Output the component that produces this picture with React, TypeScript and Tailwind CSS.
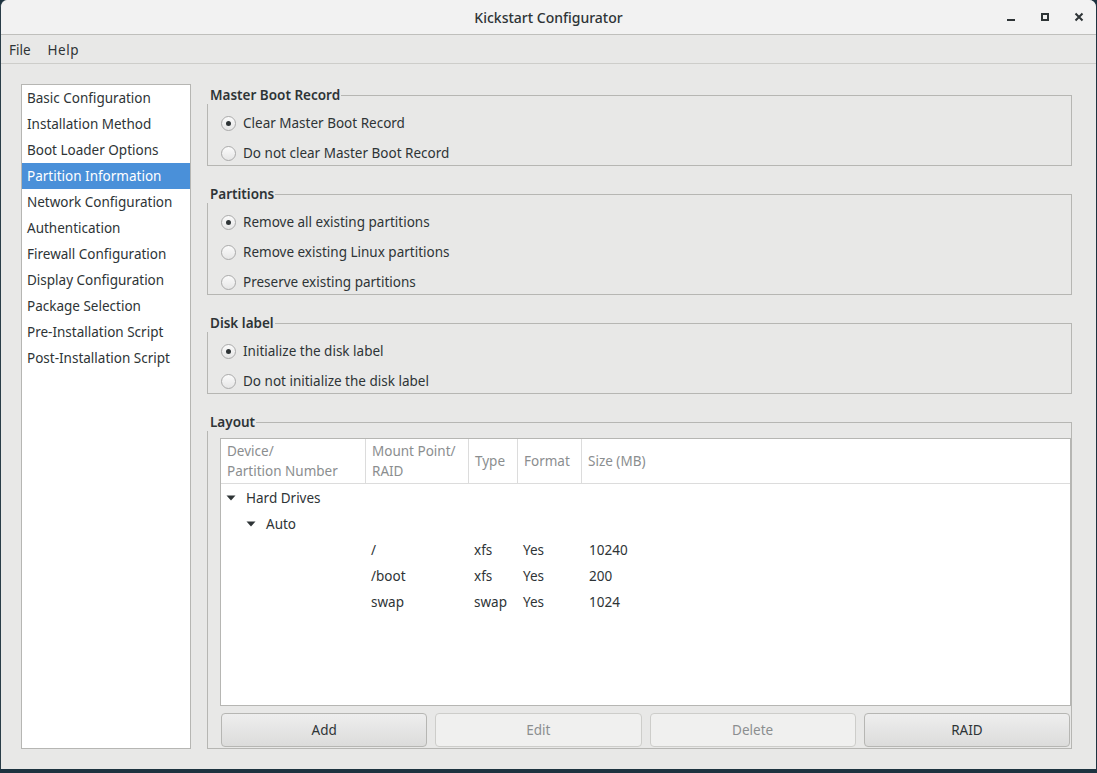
import React from "react";

const font = { fontFamily: '"Noto Sans", "Open Sans", sans-serif' };

function Radio({ checked, label }: { checked?: boolean; label: string }) {
  return (
    <div className="flex items-center h-[30px] pl-[14px]">
      <span className="w-[15px] h-[15px] rounded-full border border-[#aaaaaa] bg-gradient-to-b from-[#fbfbfb] to-[#e6e6e6] flex items-center justify-center shrink-0">
        {checked && <span className="w-[5px] h-[5px] rounded-full bg-[#2e3436]" />}
      </span>
      <span className="ml-[7px] text-[13.5px] text-[#2e3436]">{label}</span>
    </div>
  );
}

function Frame({ title, children, className = "" }: { title: string; children: React.ReactNode; className?: string }) {
  return (
    <div className={"relative " + className}>
      <div className="absolute left-0 right-0 top-[9px] bottom-0 border border-[#b6b6b3]" />
      <div className="relative flex">
        <span className="bg-[#e8e8e7] pl-[3px] pr-[1px] text-[13.5px] font-semibold text-[#2e3436] leading-[18px]">{title}</span>
      </div>
      <div className="relative">{children}</div>
    </div>
  );
}

const navItems = [
  "Basic Configuration",
  "Installation Method",
  "Boot Loader Options",
  "Partition Information",
  "Network Configuration",
  "Authentication",
  "Firewall Configuration",
  "Display Configuration",
  "Package Selection",
  "Pre-Installation Script",
  "Post-Installation Script",
];

function Caret() {
  return (
    <svg width="10" height="6" viewBox="0 0 10 6" className="shrink-0">
      <path d="M0.5 0.5 L9.5 0.5 L5 5.5 Z" fill="#2e3436" />
    </svg>
  );
}

export default function App() {
  return (
    <div className="w-[1097px] h-[773px] bg-[#1d3340] overflow-hidden" style={font}>
      <div className="w-[1096px] h-[769px] bg-[#e8e8e7] rounded-t-[7px] border-l border-[#2a3d48] flex flex-col">
        {/* title bar */}
        <div className="h-[35px] bg-[#f2f2f2] border-b border-[#bfbfbc] rounded-t-[7px] flex items-center relative shrink-0">
          <div className="absolute inset-0 flex items-center justify-center text-[14px] font-medium text-[#2e3436]">Kickstart Configurator</div>
          <div className="ml-auto flex items-center mr-[3px] relative">
            <div className="w-[28px] h-[28px] flex items-center justify-center">
              <div className="w-[8px] h-[2px] bg-[#2e3436] mt-[6px]" />
            </div>
            <div className="w-[28px] h-[28px] flex items-center justify-center ml-[6px]">
              <div className="w-[8px] h-[8px] border-2 border-[#2e3436]" />
            </div>
            <div className="w-[28px] h-[28px] flex items-center justify-center ml-[6px]">
              <svg width="10" height="10" viewBox="0 0 10 10">
                <path d="M1.5 1.5 L8.5 8.5 M8.5 1.5 L1.5 8.5" stroke="#2e3436" strokeWidth="2" />
              </svg>
            </div>
          </div>
        </div>
        {/* menu bar */}
        <div className="h-[29px] border-b border-[#cdcdca] flex items-center text-[13.5px] text-[#2e3436] shrink-0">
          <span className="ml-[8px] mt-[2px]">File</span>
          <span className="ml-[17px] mt-[2px] tracking-[0.5px]">Help</span>
        </div>
        {/* body */}
        <div className="flex-1 flex pl-[20px] pt-[20px] pb-[20px] pr-[24px] gap-[16px]">
          <div className="w-[170px] bg-white border border-[#b6b6b3] flex flex-col">
            {navItems.map((n) => (
              <div
                key={n}
                className={
                  "h-[26px] flex items-center pl-[5px] text-[13.5px] whitespace-nowrap leading-[20px] " +
                  (n === "Partition Information" ? "bg-[#4a90d9] text-white" : "text-[#2e3436]")
                }
              >
                <span className="-mt-[1px]">{n}</span>
              </div>
            ))}
          </div>
          <div className="flex-1 flex flex-col">
            <Frame title="Master Boot Record" className="mt-[2px] h-[80px]">
              <div className="pt-[4px]">
                <Radio checked label="Clear Master Boot Record" />
                <Radio label="Do not clear Master Boot Record" />
              </div>
            </Frame>
            <Frame title="Partitions" className="mt-[19px] h-[110px]">
              <div className="pt-[4px]">
                <Radio checked label="Remove all existing partitions" />
                <Radio label="Remove existing Linux partitions" />
                <Radio label="Preserve existing partitions" />
              </div>
            </Frame>
            <Frame title="Disk label" className="mt-[19px] h-[80px]">
              <div className="pt-[4px]">
                <Radio checked label="Initialize the disk label" />
                <Radio label="Do not initialize the disk label" />
              </div>
            </Frame>
            <Frame title="Layout" className="mt-[19px] flex-1 flex flex-col">
              <div className="pl-[13px] pr-[1px] pt-[7px] flex flex-col">
                <div className="h-[268px] bg-white border border-[#b6b6b3] flex flex-col text-[13.5px]">
                  <div className="h-[45px] border-b border-[#dcdcdc] flex text-[#8b8e8f] leading-[20px] shrink-0">
                    <div className="w-[145px] border-r border-[#dcdcdc] pl-[6px] flex flex-col justify-center">
                      <span>Device/</span>
                      <span>Partition Number</span>
                    </div>
                    <div className="w-[103px] border-r border-[#dcdcdc] pl-[6px] flex flex-col justify-center">
                      <span>Mount Point/</span>
                      <span>RAID</span>
                    </div>
                    <div className="w-[49px] border-r border-[#dcdcdc] pl-[6px] flex items-center">Type</div>
                    <div className="w-[64px] border-r border-[#dcdcdc] pl-[6px] flex items-center">Format</div>
                    <div className="flex-1 pl-[6px] flex items-center">Size (MB)</div>
                  </div>
                  <div className="pt-[1px] text-[#2e3436]">
                    <div className="h-[26px] flex items-center pl-[5px] gap-[10px]">
                      <Caret />
                      <span>Hard Drives</span>
                    </div>
                    <div className="h-[26px] flex items-center pl-[25px] gap-[10px]">
                      <Caret />
                      <span>Auto</span>
                    </div>
                    {[
                      ["/", "xfs", "Yes", "10240"],
                      ["/boot", "xfs", "Yes", "200"],
                      ["swap", "swap", "Yes", "1024"],
                    ].map((r) => (
                      <div key={r[0]} className="h-[26px] flex items-center">
                        <div className="w-[145px]" />
                        <div className="w-[103px] pl-[5px]">{r[0]}</div>
                        <div className="w-[49px] pl-[5px]">{r[1]}</div>
                        <div className="w-[64px] pl-[5px]">{r[2]}</div>
                        <div className="flex-1 pl-[7px]">{r[3]}</div>
                      </div>
                    ))}
                  </div>
                </div>
                <div className="mt-[7px] pl-[1px] pr-[1px] grid grid-cols-4 gap-[8px]">
                  <button className="h-[34px] rounded-[4px] border border-[#b6b6b3] bg-gradient-to-b from-[#eeeeee] to-[#dcdcdb] text-[13.5px] text-[#2e3436]">Add</button>
                  <button className="h-[34px] rounded-[4px] border border-[#cdcdca] bg-[#f0f0ef] text-[13.5px] text-[#8b8e8f]">Edit</button>
                  <button className="h-[34px] rounded-[4px] border border-[#cdcdca] bg-[#f0f0ef] text-[13.5px] text-[#8b8e8f]">Delete</button>
                  <button className="h-[34px] rounded-[4px] border border-[#b6b6b3] bg-gradient-to-b from-[#eeeeee] to-[#dcdcdb] text-[13.5px] text-[#2e3436]">RAID</button>
                </div>
              </div>
            </Frame>
          </div>
        </div>
      </div>
    </div>
  );
}
